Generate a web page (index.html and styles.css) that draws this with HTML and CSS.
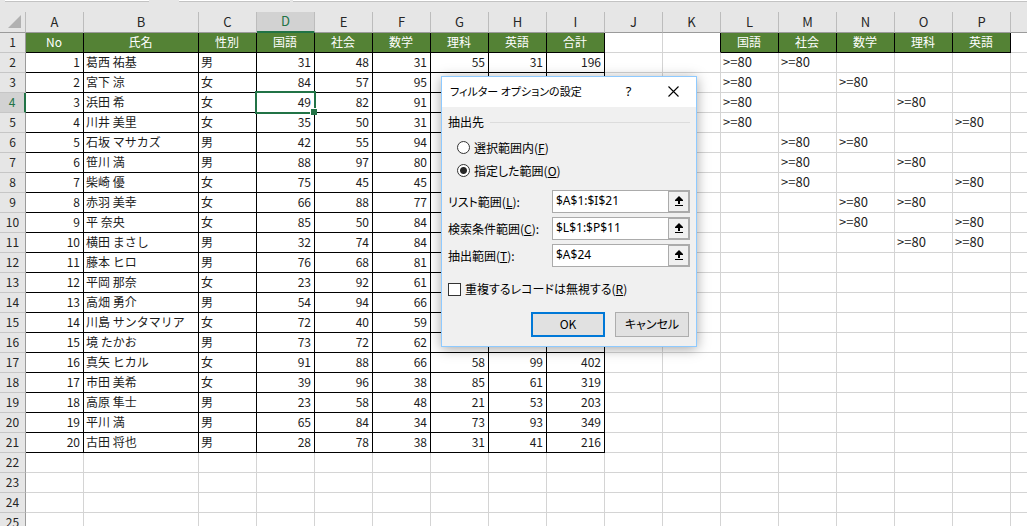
FILE: index.html
```html
<!DOCTYPE html>
<html lang="ja">
<head>
<meta charset="utf-8">
<title>フィルター オプションの設定</title>
<link rel="stylesheet" href="styles.css">
</head>
<body>
<div class="app">
<div class="formula-bar"><span class="name-box"></span><span class="formula-tools"></span><span class="formula-input"></span></div>
<main class="sheet">
<table class="grid">
<colgroup><col class="col-head"><col class="col"><col class="col-name"><col class="col" span="15"></colgroup>
<thead>
<tr><th class="corner"><svg width="14" height="13" viewBox="0 0 14 13"><path d="M13 0V13H0Z" fill="#b1b1b1"/></svg></th><th>A</th><th>B</th><th>C</th><th class="active">D</th><th>E</th><th>F</th><th>G</th><th>H</th><th>I</th><th>J</th><th>K</th><th>L</th><th>M</th><th>N</th><th>O</th><th>P</th><th></th></tr>
</thead>
<tbody class="records">
<tr class="titles"><th>1</th><td>No</td><td>氏名</td><td>性別</td><td>国語</td><td>社会</td><td>数学</td><td>理科</td><td>英語</td><td>合計</td><td></td><td></td><td>国語</td><td>社会</td><td>数学</td><td>理科</td><td>英語</td><td></td></tr>
<tr><th>2</th><td>1</td><td>葛西 祐基</td><td>男</td><td>31</td><td>48</td><td>31</td><td>55</td><td>31</td><td>196</td><td></td><td></td><td>&gt;=80</td><td>&gt;=80</td><td></td><td></td><td></td><td></td></tr>
<tr><th>3</th><td>2</td><td>宮下 涼</td><td>女</td><td>84</td><td>57</td><td>95</td><td></td><td></td><td></td><td></td><td></td><td>&gt;=80</td><td></td><td>&gt;=80</td><td></td><td></td><td></td></tr>
<tr><th class="active">4</th><td>3</td><td>浜田 希</td><td>女</td><td class="selected">49</td><td>82</td><td>91</td><td></td><td></td><td></td><td></td><td></td><td>&gt;=80</td><td></td><td></td><td>&gt;=80</td><td></td><td></td></tr>
<tr><th>5</th><td>4</td><td>川井 美里</td><td>女</td><td>35</td><td>50</td><td>31</td><td></td><td></td><td></td><td></td><td></td><td>&gt;=80</td><td></td><td></td><td></td><td>&gt;=80</td><td></td></tr>
<tr><th>6</th><td>5</td><td>石坂 マサカズ</td><td>男</td><td>42</td><td>55</td><td>94</td><td></td><td></td><td></td><td></td><td></td><td></td><td>&gt;=80</td><td>&gt;=80</td><td></td><td></td><td></td></tr>
<tr><th>7</th><td>6</td><td>笹川 満</td><td>男</td><td>88</td><td>97</td><td>80</td><td></td><td></td><td></td><td></td><td></td><td></td><td>&gt;=80</td><td></td><td>&gt;=80</td><td></td><td></td></tr>
<tr><th>8</th><td>7</td><td>柴崎 優</td><td>女</td><td>75</td><td>45</td><td>45</td><td></td><td></td><td></td><td></td><td></td><td></td><td>&gt;=80</td><td></td><td></td><td>&gt;=80</td><td></td></tr>
<tr><th>9</th><td>8</td><td>赤羽 美幸</td><td>女</td><td>66</td><td>88</td><td>77</td><td></td><td></td><td></td><td></td><td></td><td></td><td></td><td>&gt;=80</td><td>&gt;=80</td><td></td><td></td></tr>
<tr><th>10</th><td>9</td><td>平 奈央</td><td>女</td><td>85</td><td>50</td><td>84</td><td></td><td></td><td></td><td></td><td></td><td></td><td></td><td>&gt;=80</td><td></td><td>&gt;=80</td><td></td></tr>
<tr><th>11</th><td>10</td><td>横田 まさし</td><td>男</td><td>32</td><td>74</td><td>84</td><td></td><td></td><td></td><td></td><td></td><td></td><td></td><td></td><td>&gt;=80</td><td>&gt;=80</td><td></td></tr>
<tr><th>12</th><td>11</td><td>藤本 ヒロ</td><td>男</td><td>76</td><td>68</td><td>81</td><td></td><td></td><td></td><td></td><td></td><td></td><td></td><td></td><td></td><td></td><td></td></tr>
<tr><th>13</th><td>12</td><td>平岡 那奈</td><td>女</td><td>23</td><td>92</td><td>61</td><td></td><td></td><td></td><td></td><td></td><td></td><td></td><td></td><td></td><td></td><td></td></tr>
<tr><th>14</th><td>13</td><td>高畑 勇介</td><td>男</td><td>54</td><td>94</td><td>66</td><td></td><td></td><td></td><td></td><td></td><td></td><td></td><td></td><td></td><td></td><td></td></tr>
<tr><th>15</th><td>14</td><td>川島 サンタマリア</td><td>女</td><td>72</td><td>40</td><td>59</td><td></td><td></td><td></td><td></td><td></td><td></td><td></td><td></td><td></td><td></td><td></td></tr>
<tr><th>16</th><td>15</td><td>境 たかお</td><td>男</td><td>73</td><td>72</td><td>62</td><td></td><td></td><td></td><td></td><td></td><td></td><td></td><td></td><td></td><td></td><td></td></tr>
<tr><th>17</th><td>16</td><td>真矢 ヒカル</td><td>女</td><td>91</td><td>88</td><td>66</td><td>58</td><td>99</td><td>402</td><td></td><td></td><td></td><td></td><td></td><td></td><td></td><td></td></tr>
<tr><th>18</th><td>17</td><td>市田 美希</td><td>女</td><td>39</td><td>96</td><td>38</td><td>85</td><td>61</td><td>319</td><td></td><td></td><td></td><td></td><td></td><td></td><td></td><td></td></tr>
<tr><th>19</th><td>18</td><td>高原 隼士</td><td>男</td><td>23</td><td>58</td><td>48</td><td>21</td><td>53</td><td>203</td><td></td><td></td><td></td><td></td><td></td><td></td><td></td><td></td></tr>
<tr><th>20</th><td>19</td><td>平川 満</td><td>男</td><td>65</td><td>84</td><td>34</td><td>73</td><td>93</td><td>349</td><td></td><td></td><td></td><td></td><td></td><td></td><td></td><td></td></tr>
<tr><th>21</th><td>20</td><td>古田 将也</td><td>男</td><td>28</td><td>78</td><td>38</td><td>31</td><td>41</td><td>216</td><td></td><td></td><td></td><td></td><td></td><td></td><td></td><td></td></tr>
</tbody>
<tbody>
<tr><th>22</th><td></td><td></td><td></td><td></td><td></td><td></td><td></td><td></td><td></td><td></td><td></td><td></td><td></td><td></td><td></td><td></td><td></td></tr>
<tr><th>23</th><td></td><td></td><td></td><td></td><td></td><td></td><td></td><td></td><td></td><td></td><td></td><td></td><td></td><td></td><td></td><td></td><td></td></tr>
<tr><th>24</th><td></td><td></td><td></td><td></td><td></td><td></td><td></td><td></td><td></td><td></td><td></td><td></td><td></td><td></td><td></td><td></td><td></td></tr>
<tr><th>25</th><td></td><td></td><td></td><td></td><td></td><td></td><td></td><td></td><td></td><td></td><td></td><td></td><td></td><td></td><td></td><td></td><td></td></tr>
</tbody>
</table>
</main>
<form class="dialog" role="dialog" aria-labelledby="dialog-title">
<header class="titlebar">
<h1 class="title" id="dialog-title">フィルター オプションの設定</h1>
<button class="caption" type="button" aria-label="ヘルプ">?</button>
<button class="caption" type="button" aria-label="閉じる"><svg width="11" height="11" viewBox="0 0 11 11"><path d="M.5 .5L10.500 10.500M10.500 .5L.5 10.500" stroke="#000" stroke-width="1.100" fill="none"/></svg></button>
</header>
<div class="body">
<fieldset class="target">
<legend>抽出先</legend>
<label class="choice"><input type="radio" name="target"><span>選択範囲内(<u>F</u>)</span></label>
<label class="choice"><input type="radio" name="target" checked><span>指定した範囲(<u>O</u>)</span></label>
</fieldset>
<div class="fields">
<div class="field"><label for="list">リスト範囲(<u>L</u>):</label><span class="range"><input id="list" type="text" value="$A$1:$I$21"><button type="button" aria-label="リスト範囲を選択"><svg width="10" height="11" viewBox="0 0 10 11"><path d="M5 0L9 4V5H6V8H4V5H1V4ZM1 9H9V10H1Z"/></svg></button></span></div>
<div class="field"><label for="criteria">検索条件範囲(<u>C</u>):</label><span class="range"><input id="criteria" type="text" value="$L$1:$P$11"><button type="button" aria-label="検索条件範囲を選択"><svg width="10" height="11" viewBox="0 0 10 11"><path d="M5 0L9 4V5H6V8H4V5H1V4ZM1 9H9V10H1Z"/></svg></button></span></div>
<div class="field"><label for="copy">抽出範囲(<u>T</u>):</label><span class="range"><input id="copy" type="text" value="$A$24"><button type="button" aria-label="抽出範囲を選択"><svg width="10" height="11" viewBox="0 0 10 11"><path d="M5 0L9 4V5H6V8H4V5H1V4ZM1 9H9V10H1Z"/></svg></button></span></div>
</div>
<label class="unique"><input type="checkbox"><span>重複するレコードは無視する(<u>R</u>)</span></label>
<div class="actions"><button class="push primary" type="submit">OK</button><button class="push" type="button">キャンセル</button></div>
</div>
</form>
</div>
</body>
</html>
```

FILE: styles.css
```css
* { box-sizing: border-box; }

body {
  margin: 0;
  background: #e6e6e6;
  color: #000;
  font: 12px/16px "Noto Sans CJK JP", sans-serif;
}

.app {
  position: relative;
  height: 100vh;
  overflow: hidden;
}

/* Formula bar */
.formula-bar {
  display: grid;
  grid-template-columns: 144px 138px 1fr;
  column-gap: 3px;
  height: 12px;
  padding-left: 5px;
}

.formula-bar span {
  height: 2px;
  background: #fff;
  border-bottom: 1px solid #c3c3c3;
}

.formula-bar .formula-tools { margin-left: 27px; }

/* Worksheet */
.grid {
  width: 1069px;
  table-layout: fixed;
  border-collapse: separate;
  border-spacing: 0;
}

.col-head { width: 26px; }
.col { width: 58px; }
.col-name { width: 115px; }

.grid th,
.grid td {
  height: 20px;
  padding: 0 3px 2px 2px;
  line-height: 16px;
  white-space: nowrap;
  border-right: 1px solid #d4d4d4;
  border-bottom: 1px solid #d4d4d4;
}

.grid td { color: #1c1c1c; }

.grid th {
  padding: 0 0 1px;
  font-weight: 400;
  color: #262626;
  background: #e6e6e6;
}

.grid thead th {
  height: 21px;
  font-size: 13px;
  border-right-color: #bcbcbc;
  border-bottom-color: #9b9b9b;
}

.grid tbody th {
  border-right-color: #9b9b9b;
  border-bottom-color: #c6c6c6;
}

.grid .corner {
  padding-right: 3px;
  text-align: right;
}

.corner svg { display: block; margin-left: auto; }

.grid thead .active {
  color: #217346;
  background: #d2d2d2;
  border-bottom: 2px solid #217346;
}

.grid tbody .active {
  color: #217346;
  background: #d2d2d2;
  border-right: 2px solid #217346;
}

.grid td { background: #fff; }

.records td:nth-child(-n+10) {
  text-align: right;
  border-color: #000;
}

.records td:nth-child(3),
.records td:nth-child(4) { text-align: left; }

.records td:nth-child(n+13) { font-size: 13px; }

.records .titles td:nth-child(-n+10),
.records .titles td:nth-child(n+13):nth-child(-n+17) {
  color: #fff;
  font-size: 12px;
  text-align: center;
  background: #548235;
  border-color: #000;
}

.records .titles td:nth-child(12) { border-right-color: #000; }

.selected { position: relative; }

.selected::before {
  content: "";
  position: absolute;
  inset: -2px;
  border: 2px solid #217346;
}

.selected::after {
  content: "";
  position: absolute;
  right: -3px;
  bottom: -3px;
  width: 6px;
  height: 6px;
  background: #217346;
  border-top: 1px solid #fff;
  border-left: 1px solid #fff;
}

/* Advanced filter dialog, floating over the worksheet */
.dialog {
  position: absolute;
  left: 441px;
  top: 76px;
  width: 256px;
  background: #f0f0f0;
  border: 1px solid #8ecaff;
  box-shadow: 0 2px 12px rgba(0, 0, 0, 0.35);
  font-feature-settings: "palt";
}

.titlebar {
  display: flex;
  align-items: center;
  height: 30px;
  padding: 0 0 2px 8px;
  background: #fff;
}

.title {
  flex: 1;
  margin: 0;
  font-size: 11px;
  font-weight: 400;
  white-space: nowrap;
}

.caption {
  display: grid;
  place-items: center;
  width: 45px;
  height: 28px;
  padding: 0;
  border: 0;
  background: none;
  font: 13px/16px "Noto Sans", sans-serif;
}

.body { padding: 7px 6px 9px; }

.target {
  margin: 0;
  padding: 0;
  border: 0;
}

.target legend {
  display: flex;
  align-items: center;
  gap: 6px;
  width: 100%;
  height: 16px;
  padding: 0;
}

.target legend::after {
  content: "";
  flex: 1;
  border-top: 1px solid #dcdcdc;
}

.choice {
  display: flex;
  align-items: center;
  gap: 4px;
  height: 23px;
  margin-left: 9px;
}

.target legend + .choice { margin-top: 6px; }

.choice input,
.unique input {
  appearance: none;
  flex: none;
  width: 13px;
  height: 13px;
  margin: 0;
  background: #fff;
  border: 1px solid #333;
}

.choice input { border-radius: 50%; }

.choice input:checked {
  background: radial-gradient(circle, #262626 3px, #fff 4px);
}

.fields {
  display: grid;
  gap: 4px;
  margin-top: 8px;
}

.field {
  display: grid;
  grid-template-columns: 104px minmax(0, 1fr);
  align-items: center;
  white-space: nowrap;
}

.range {
  display: flex;
  height: 23px;
  background: #fff;
  border: 1px solid #ababab;
}

.range input {
  flex: 1;
  min-width: 0;
  padding: 0 3px 1px;
  border: 0;
  background: none;
  font: 12px/16px "Noto Sans", sans-serif;
}

.range button {
  display: grid;
  flex: none;
  place-items: center;
  width: 21px;
  padding: 0;
  background: #f0f0f0;
  border: 1px solid #ababab;
}

.unique {
  display: flex;
  align-items: center;
  gap: 4px;
  height: 16px;
  margin-top: 14px;
  white-space: nowrap;
}

.actions {
  display: flex;
  justify-content: flex-end;
  gap: 10px;
  margin-top: 15px;
  padding-right: 1px;
}

.push {
  width: 74px;
  height: 25px;
  padding: 0 0 1px;
  background: #e1e1e1;
  border: 1px solid #adadad;
  font: inherit;
  font-feature-settings: inherit;
}

.primary { border: 2px solid #0078d7; }
```
